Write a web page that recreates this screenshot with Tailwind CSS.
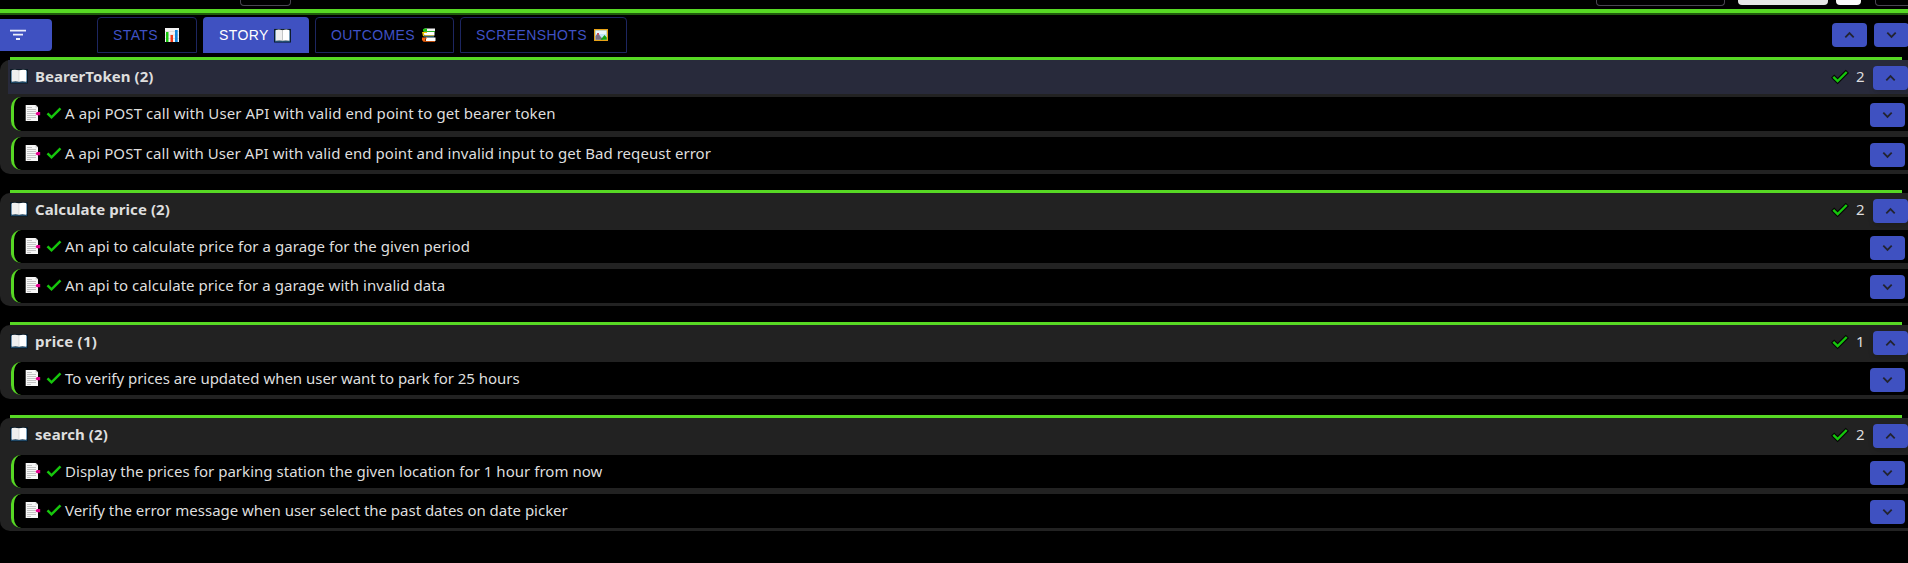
<!DOCTYPE html>
<html lang="en">
<head>
<meta charset="utf-8">
<title>Stories</title>
<script src="https://cdn.jsdelivr.net/npm/@tailwindcss/browser@4"></script>
</head>
<body class="bg-black h-[563px] w-[1908px] overflow-hidden font-['Noto_Sans','Open_Sans',sans-serif] text-[15px] leading-none text-[#dedede]">
<svg class="hidden">
  <symbol id="book" viewBox="0 0 18 16"><path d="M0 1h18v14.500H0z" fill="#0b1a26"/><path d="M1 13.500h16v1.200H1z" fill="#2a5f86"/><path d="M1.300 2.500h.8v11h-.8zM16 2.500h.8v11H16z" fill="#9cc7e8"/><path d="M2 2q3.500-.8 7 .3v11.400q-3.500-.9-7 0z" fill="#efefef"/><path d="M9 2.300q3.500-1.100 7-.3v11.700q-3.500-.9-7 0z" fill="#fff"/><path d="M9 2v12" stroke="#c9c9c9" stroke-width=".6"/></symbol>
  <symbol id="doc" viewBox="0 0 16 18"><path d="M.700 1h10l2.300 2.300V17H.700z" fill="#f7f7f7"/><path d="M10.500 1v2.500H13z" fill="#cfcfcf"/><path d="M2 3.500h5M2 5.500h9M2 7.500h9M2 9.500h8M2 11.500h9M2 13.500h9M2 15.500h4" stroke="#bdbdbd" stroke-width=".9"/><path d="M12 8h3.200v3.300H12l-1.700-1.600z" fill="#e3008c"/></symbol>
  <symbol id="check" viewBox="0 0 18 16"><path d="M2.500 8.300l4 4L15.500 3.300" fill="none" stroke="#16c60c" stroke-width="2.500"/></symbol>
  <symbol id="checko" viewBox="0 0 18 16"><path d="M1.600 7.100l5 5L16.400 2.300" fill="none" stroke="#050505" stroke-width="4.600"/><path d="M2.300 7.800l4.300 4.300L15.700 3" fill="none" stroke="#16c60c" stroke-width="2.400"/></symbol>
  <symbol id="up" viewBox="0 0 12 8"><path d="M1.300 6.300L5.500 2.100l4.200 4.200" fill="none" stroke="#232430" stroke-width="1.800"/></symbol>
  <symbol id="down" viewBox="0 0 12 8"><path d="M1.300 1.700L5.500 5.900l4.200-4.200" fill="none" stroke="#232430" stroke-width="1.800"/></symbol>
</svg>

<!-- lower edge of the toolbar -->
<div class="h-[9px] flex items-start">
  <div class="shrink-0 ml-[240px] w-[51px] h-[6px] rounded-b border border-t-0 border-[#494551]"></div>
  <div class="shrink-0 ml-[1305px] w-[129px] h-[6px] rounded-b border border-t-0 border-[#494551]"></div>
  <div class="shrink-0 ml-[13px] w-[90px] h-[5px] rounded-b bg-[#e6e6e6]"></div>
  <div class="shrink-0 ml-[8px] w-[25px] h-[5px] rounded-b bg-[#fafafa]"></div>
  <div class="ml-[14px] w-[60px] shrink-0 h-[6px] rounded-b border border-t-0 border-[#494551]"></div>
</div>
<div class="h-[6px] bg-[#57d824] border-b-2 border-b-[#205a0c] bg-clip-padding"></div>

<!-- tabs -->
<div class="h-[42px] flex items-start font-['Liberation_Sans',Arial,sans-serif] text-sm leading-none tracking-[0.4px] text-[#3f51c5]">
  <button class="shrink-0 mt-[4px] w-[52px] h-[32px] rounded-r bg-[#3f51c1] pl-[10px]">
    <svg class="w-4 h-3" viewBox="0 0 16 12"><path d="M0 1.700h16M3 5.700h10M6 10h4" stroke="#eceefa" stroke-width="1.800"/></svg>
  </button>
  <div class="shrink-0 ml-[45px] mt-[2px] flex gap-[6px]">
    <div class="w-[100px] h-[36px] rounded-t border border-[#1d2660] flex items-center pl-[15px]"><span class="w-[52px]">STATS</span>
      <svg class="w-[14px] h-[14px]" viewBox="0 0 14 14"><path d="M0 0h14v14H0z" fill="#f3f3f3"/><path d="M0 3.500h14M0 7h14M0 10.500h14" stroke="#d4d4d4" stroke-width=".7"/><path d="M1 4h2.500v10H1z" fill="#16c60c"/><path d="M5.500 7H8v7H5.500z" fill="#f03a17"/><path d="M10 2h2.700v12H10z" fill="#0f86dc"/></svg></div>
    <div class="w-[106px] h-[36px] rounded-t bg-[#3f51c1] text-white flex items-center pl-[16px]"><span class="w-[55px]">STORY</span><svg class="w-[17px] h-[15px]"><use href="#book"/></svg></div>
    <div class="w-[139px] h-[36px] rounded-t border border-[#1d2660] flex items-center pl-[15px]"><span class="w-[91px]">OUTCOMES</span>
      <svg class="w-[14px] h-[14px]" viewBox="0 0 14 14"><path d="M1 1.500L3 .500h10v3H2z" fill="#f4f4f4"/><path d="M1 1l2-.5h2v3H1zM5 3h8v.7H5z" fill="#16c60c"/><path d="M1 4h11.500v3.500H2.500z" fill="#fff"/><path d="M0 4h5v1H2v2.500h10v.8H1z" fill="#f2c500"/><path d="M2 8.500h10v.8H2z" fill="#1686d9"/><path d="M4 9.500h9.500V13H4z" fill="#fff"/><path d="M0 9.500h5v1H3.500V13H13v.8H1.500L0 12z" fill="#f7630c"/></svg></div>
    <div class="w-[167px] h-[36px] rounded-t border border-[#1d2660] flex items-center pl-[15px]"><span class="w-[118px]">SCREENSHOTS</span>
      <svg class="w-[14px] h-[12px]" viewBox="0 0 14 12"><path d="M.600.600h12.800v10.800H.600z" fill="#bfe4f7" stroke="#e8a317" stroke-width="1.200"/><path d="M2 2h10v3H2z" fill="#e8f7fd"/><path d="M1.500 10.700V7l2.500-3 2.500 3.500 3 3.200z" fill="#7a6d80"/><path d="M3 4h2v2H3z" fill="#c24f5d"/><path d="M6.500 10.700l4-4.700 2.300 2.500v2.200z" fill="#13a10e"/></svg></div>
  </div>
  <button class="ml-[1205px] mt-[8px] w-[35px] h-[24px] shrink-0 rounded bg-[#3f51c1] flex items-center justify-center"><svg class="w-3 h-2"><use href="#up"/></svg></button>
  <button class="ml-[7px] mt-[8px] w-[35px] h-[24px] shrink-0 rounded bg-[#3f51c1] flex items-center justify-center"><svg class="w-3 h-2"><use href="#down"/></svg></button>
</div>

<!-- stories -->
<section class="mb-4">
  <div class="ml-[10px] mr-[6px] h-[3px] bg-[#57d824]"></div>
  <div class="h-[114px] rounded-l-[10px] bg-[#222]">
    <div class="h-[34px] ml-2 mb-[3px] pl-[2px] bg-[#282a3b] flex items-start">
      <svg class="mt-[8px] w-[18px] h-[16px]"><use href="#book"/></svg><b class="ml-[7px] mt-[9px] tracking-[0.06px]">BearerToken (2)</b>
      <svg class="ml-auto mt-[9px] w-[18px] h-[16px]"><use href="#checko"/></svg><span class="ml-[7px] mt-[9px] w-[17px]">2</span>
      <button class="mt-[6px] w-[35px] h-[24px] rounded bg-[#3f51c1] shadow-md flex items-center justify-center"><svg class="w-3 h-2"><use href="#up"/></svg></button>
    </div>
    <div class="ml-[11px] mb-[6px] h-[34px] rounded-l-[10px] border-l-3 border-[#57d824] bg-black flex items-start pl-[11px] pr-[3px]">
      <svg class="mt-[7px] w-[16px] h-[18px]"><use href="#doc"/></svg><svg class="ml-[4px] mt-[8px] w-[18px] h-[16px]"><use href="#check"/></svg><span class="ml-[2px] mt-[9px] tracking-[0.08px]">A api POST call with User API with valid end point to get bearer token</span>
      <button class="ml-auto mt-[6px] w-[35px] h-[24px] rounded bg-[#3f51c1] flex items-center justify-center"><svg class="w-3 h-2"><use href="#down"/></svg></button>
    </div>
    <div class="ml-[11px] h-[33px] rounded-l-[10px] border-l-3 border-[#57d824] bg-black flex items-start pl-[11px] pr-[3px]">
      <svg class="mt-[7px] w-[16px] h-[18px]"><use href="#doc"/></svg><svg class="ml-[4px] mt-[8px] w-[18px] h-[16px]"><use href="#check"/></svg><span class="ml-[2px] mt-[9px] tracking-[0.055px]">A api POST call with User API with valid end point and invalid input to get Bad reqeust error</span>
      <button class="ml-auto mt-[6px] w-[35px] h-[24px] rounded bg-[#3f51c1] flex items-center justify-center"><svg class="w-3 h-2"><use href="#down"/></svg></button>
    </div>
  </div>
</section>

<section class="mb-4">
  <div class="ml-[10px] mr-[6px] h-[3px] bg-[#57d824]"></div>
  <div class="h-[113px] rounded-l-[10px] bg-[#222]">
    <div class="h-[34px] ml-2 mb-[3px] pl-[2px] flex items-start">
      <svg class="mt-[8px] w-[18px] h-[16px]"><use href="#book"/></svg><b class="ml-[7px] mt-[9px] tracking-[0.08px]">Calculate price (2)</b>
      <svg class="ml-auto mt-[9px] w-[18px] h-[16px]"><use href="#checko"/></svg><span class="ml-[7px] mt-[9px] w-[17px]">2</span>
      <button class="mt-[6px] w-[35px] h-[24px] rounded bg-[#3f51c1] shadow-md flex items-center justify-center"><svg class="w-3 h-2"><use href="#up"/></svg></button>
    </div>
    <div class="ml-[11px] mb-[6px] h-[33px] rounded-l-[10px] border-l-3 border-[#57d824] bg-black flex items-start pl-[11px] pr-[3px]">
      <svg class="mt-[7px] w-[16px] h-[18px]"><use href="#doc"/></svg><svg class="ml-[4px] mt-[8px] w-[18px] h-[16px]"><use href="#check"/></svg><span class="ml-[2px] mt-[9px] tracking-[0.06px]">An api to calculate price for a garage for the given period</span>
      <button class="ml-auto mt-[6px] w-[35px] h-[24px] rounded bg-[#3f51c1] flex items-center justify-center"><svg class="w-3 h-2"><use href="#down"/></svg></button>
    </div>
    <div class="ml-[11px] h-[34px] rounded-l-[10px] border-l-3 border-[#57d824] bg-black flex items-start pl-[11px] pr-[3px]">
      <svg class="mt-[7px] w-[16px] h-[18px]"><use href="#doc"/></svg><svg class="ml-[4px] mt-[8px] w-[18px] h-[16px]"><use href="#check"/></svg><span class="ml-[2px] mt-[9px] tracking-[0.05px]">An api to calculate price for a garage with invalid data</span>
      <button class="ml-auto mt-[6px] w-[35px] h-[24px] rounded bg-[#3f51c1] flex items-center justify-center"><svg class="w-3 h-2"><use href="#down"/></svg></button>
    </div>
  </div>
</section>

<section class="mb-4">
  <div class="ml-[10px] mr-[6px] h-[3px] bg-[#57d824]"></div>
  <div class="h-[74px] rounded-l-[10px] bg-[#222]">
    <div class="h-[34px] ml-2 mb-[3px] pl-[2px] flex items-start">
      <svg class="mt-[8px] w-[18px] h-[16px]"><use href="#book"/></svg><b class="ml-[7px] mt-[9px] tracking-[0.22px]">price (1)</b>
      <svg class="ml-auto mt-[9px] w-[18px] h-[16px]"><use href="#checko"/></svg><span class="ml-[7px] mt-[9px] w-[17px]">1</span>
      <button class="mt-[6px] w-[35px] h-[24px] rounded bg-[#3f51c1] shadow-md flex items-center justify-center"><svg class="w-3 h-2"><use href="#up"/></svg></button>
    </div>
    <div class="ml-[11px] h-[33px] rounded-l-[10px] border-l-3 border-[#57d824] bg-black flex items-start pl-[11px] pr-[3px]">
      <svg class="mt-[7px] w-[16px] h-[18px]"><use href="#doc"/></svg><svg class="ml-[4px] mt-[8px] w-[18px] h-[16px]"><use href="#check"/></svg><span class="ml-[2px] mt-[9px] tracking-[-0.02px]">To verify prices are updated when user want to park for 25 hours</span>
      <button class="ml-auto mt-[6px] w-[35px] h-[24px] rounded bg-[#3f51c1] flex items-center justify-center"><svg class="w-3 h-2"><use href="#down"/></svg></button>
    </div>
  </div>
</section>

<section>
  <div class="ml-[10px] mr-[6px] h-[3px] bg-[#57d824]"></div>
  <div class="h-[113px] rounded-l-[10px] bg-[#222]">
    <div class="h-[34px] ml-2 mb-[3px] pl-[2px] flex items-start">
      <svg class="mt-[8px] w-[18px] h-[16px]"><use href="#book"/></svg><b class="ml-[7px] mt-[9px] tracking-[0.08px]">search (2)</b>
      <svg class="ml-auto mt-[9px] w-[18px] h-[16px]"><use href="#checko"/></svg><span class="ml-[7px] mt-[9px] w-[17px]">2</span>
      <button class="mt-[6px] w-[35px] h-[24px] rounded bg-[#3f51c1] shadow-md flex items-center justify-center"><svg class="w-3 h-2"><use href="#up"/></svg></button>
    </div>
    <div class="ml-[11px] mb-[6px] h-[33px] rounded-l-[10px] border-l-3 border-[#57d824] bg-black flex items-start pl-[11px] pr-[3px]">
      <svg class="mt-[7px] w-[16px] h-[18px]"><use href="#doc"/></svg><svg class="ml-[4px] mt-[8px] w-[18px] h-[16px]"><use href="#check"/></svg><span class="ml-[2px] mt-[9px] tracking-[0.03px]">Display the prices for parking station the given location for 1 hour from now</span>
      <button class="ml-auto mt-[6px] w-[35px] h-[24px] rounded bg-[#3f51c1] flex items-center justify-center"><svg class="w-3 h-2"><use href="#down"/></svg></button>
    </div>
    <div class="ml-[11px] h-[34px] rounded-l-[10px] border-l-3 border-[#57d824] bg-black flex items-start pl-[11px] pr-[3px]">
      <svg class="mt-[7px] w-[16px] h-[18px]"><use href="#doc"/></svg><svg class="ml-[4px] mt-[8px] w-[18px] h-[16px]"><use href="#check"/></svg><span class="ml-[2px] mt-[9px] tracking-[-0.02px]">Verify the error message when user select the past dates on date picker</span>
      <button class="ml-auto mt-[6px] w-[35px] h-[24px] rounded bg-[#3f51c1] flex items-center justify-center"><svg class="w-3 h-2"><use href="#down"/></svg></button>
    </div>
  </div>
</section>
</body>
</html>
